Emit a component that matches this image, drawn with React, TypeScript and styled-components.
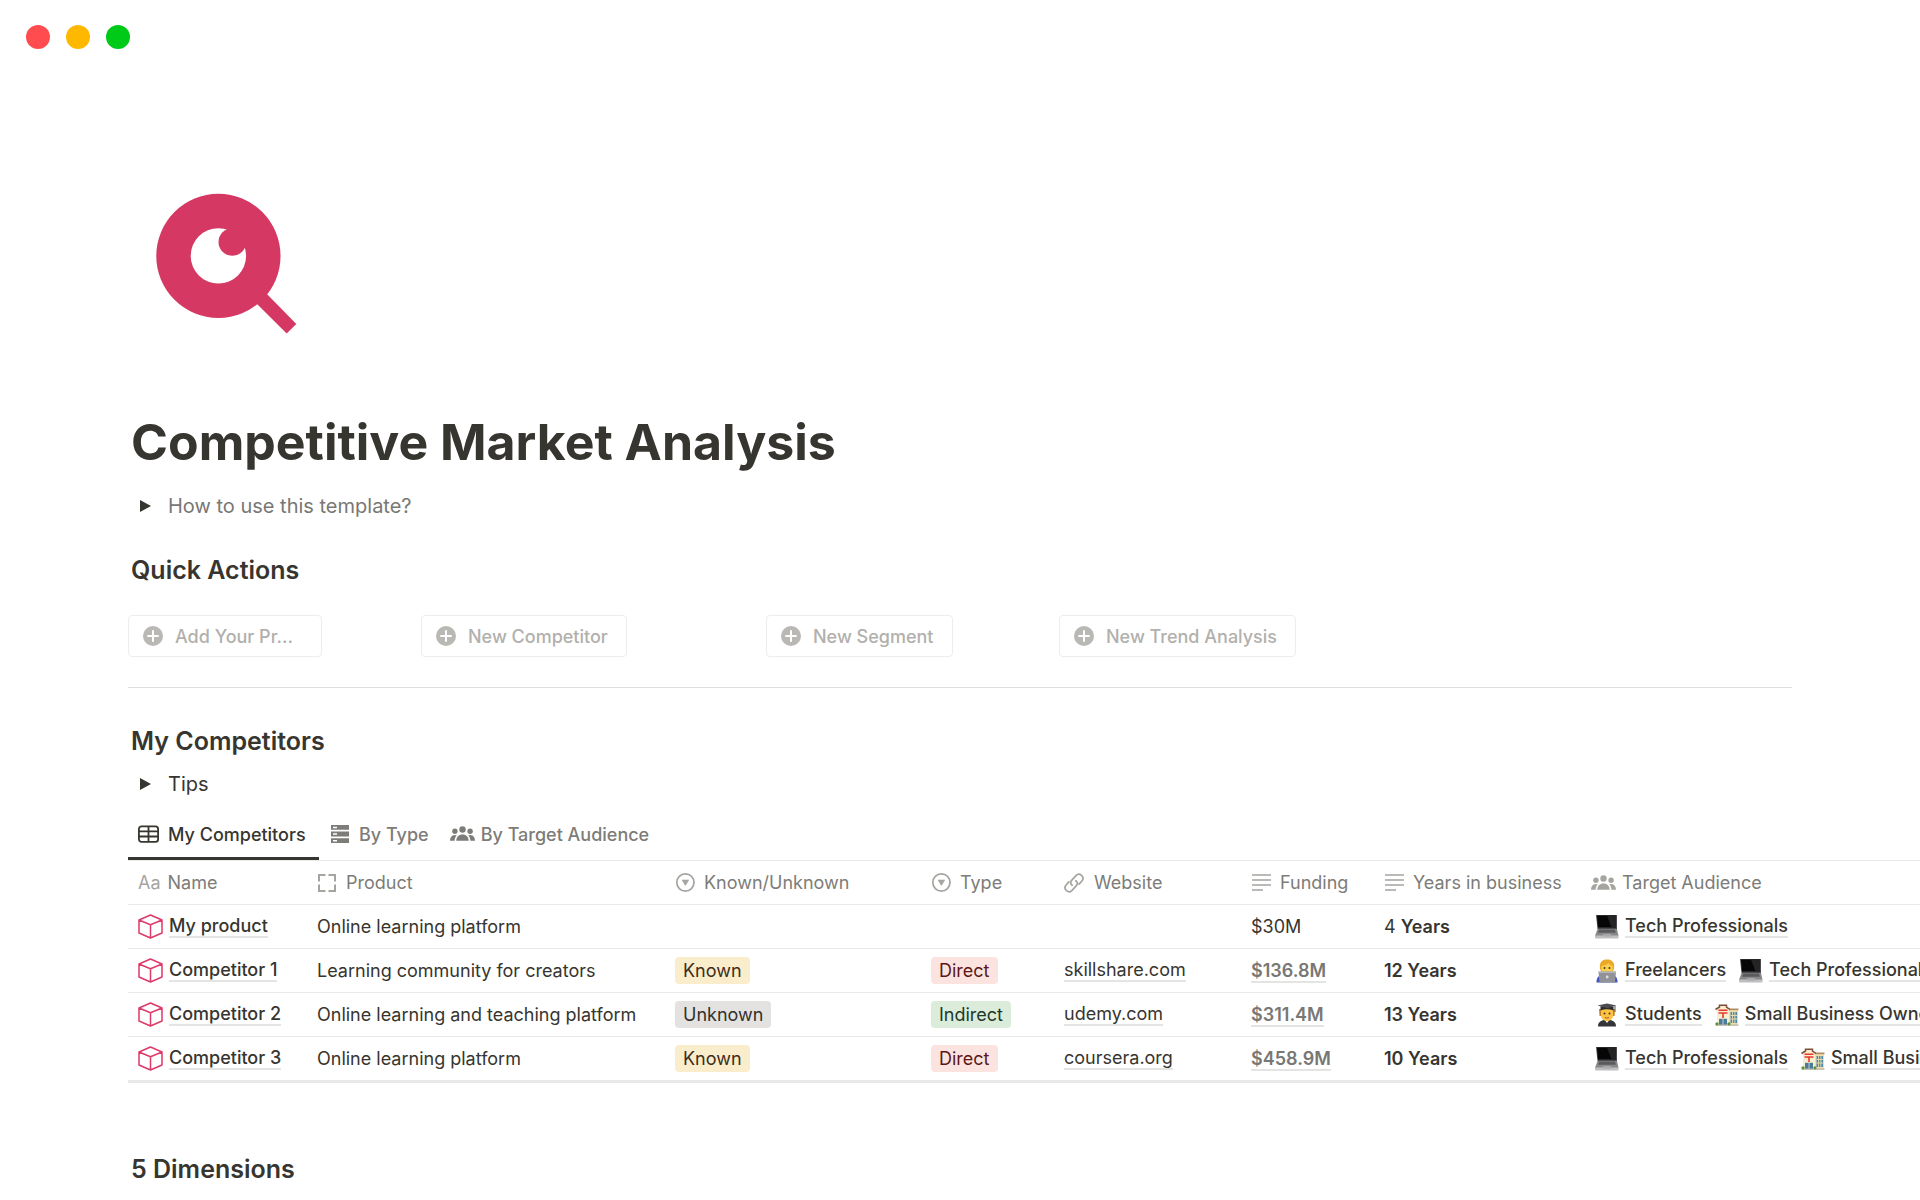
import React from 'react';
import styled, { createGlobalStyle } from 'styled-components';

const GlobalStyle = createGlobalStyle`
  * { box-sizing: border-box; }
  body {
    margin: 0;
    background: #fff;
    color: #37352f;
    font-family: Inter, 'Liberation Sans', sans-serif;
    -webkit-font-smoothing: antialiased;
  }
  h1, h2 { margin: 0; }
  button { font-family: inherit; cursor: pointer; }
  svg { display: block; flex: none; }
`;

/* ---------- layout ---------- */

const Window = styled.div`
  overflow: hidden;
`;

const TitleBar = styled.header`
  display: flex;
  gap: 16px;
  padding: 25px 26px;
`;

const Light = styled.span<{ $color: string }>`
  width: 24px;
  height: 24px;
  border-radius: 50%;
  background: ${(p) => p.$color};
`;

const Page = styled.main`
  padding: 106px 0 0 128px;
`;

const Section = styled.section`
  padding-right: 128px;
`;

const Title = styled.h1`
  margin-top: 58px;
  padding-left: 3px;
  font-size: 50px;
  line-height: 64px;
  font-weight: 700;
`;

const Heading = styled.h2<{ $space: number }>`
  margin-top: ${(p) => p.$space}px;
  padding-left: 3px;
  font-size: 25px;
  line-height: 34px;
  font-weight: 600;
`;

const Toggle = styled.button<{ $muted?: boolean; $space: number }>`
  display: flex;
  align-items: center;
  gap: 17px;
  margin-top: ${(p) => p.$space}px;
  padding: 0 0 0 12px;
  border: 0;
  background: none;
  font-size: 20px;
  line-height: 30px;
  color: ${(p) => (p.$muted ? '#787774' : '#37352f')};
`;

const Actions = styled.div`
  display: grid;
  grid-template-columns: 247fr 299fr 247fr 733fr;
  gap: 46px;
  margin-top: 28px;
`;

const ActionButton = styled.button`
  display: flex;
  align-items: center;
  justify-self: start;
  gap: 12px;
  min-width: 187px;
  height: 42px;
  padding: 0 18px 0 14px;
  border: 1px solid #ededec;
  border-radius: 4px;
  background: #fff;
  color: #b1b0ac;
  font-size: 18px;
  font-weight: 500;
  white-space: nowrap;

  &:first-child { min-width: 194px; }
`;

const Divider = styled.hr`
  height: 1px;
  margin: 30px 0 0;
  border: 0;
  background: #dfdfde;
`;

const Tabs = styled.div`
  display: flex;
  gap: 2px;
  margin-top: 9px;
`;

const Tab = styled.button<{ $active?: boolean; $gap: number }>`
  display: flex;
  align-items: center;
  gap: ${(p) => p.$gap}px;
  height: 52px;
  padding: 3px 9px 0 10px;
  border: 0;
  border-bottom: 3px solid ${(p) => (p.$active ? '#37352f' : 'transparent')};
  background: none;
  color: ${(p) => (p.$active ? '#37352f' : '#7d7c78')};
  font-size: 18px;
  font-weight: 500;
  white-space: nowrap;

  &:first-child { min-width: 191px; }
`;

const TableClip = styled.div`
  overflow: hidden;
  border-top: 1px solid #e9e9e7;
  border-bottom: 3px solid #e9e9e7;
`;

const Table = styled.table`
  table-layout: fixed;
  width: 2200px;
  border-spacing: 0;
  font-size: 18px;

  th, td {
    height: 44px;
    padding: 0 10px;
    border-bottom: 1px solid #e9e9e7;
    text-align: left;
    white-space: nowrap;
  }
  th {
    color: #7d7c78;
    font-weight: 400;
  }
  tbody tr:last-child td {
    height: 43px;
    border-bottom: 0;
  }
`;

const Inline = styled.div<{ $gap: number }>`
  display: flex;
  align-items: center;
  gap: ${(p) => p.$gap}px;
`;

const HeadIcon = styled.span`
  display: flex;
  color: #a5a49f;
`;

const Link = styled.a<{ $strong?: boolean; $muted?: boolean }>`
  padding-top: 1px;
  border-bottom: 2px solid #e4e4e2;
  line-height: 20px;
  color: ${(p) => (p.$muted ? '#787774' : '#37352f')};
  font-weight: ${(p) => (p.$muted ? 600 : p.$strong ? 500 : 400)};
  text-decoration: none;
`;

const tones = {
  yellow: ['#faedcc', '#402c1b'],
  gray: ['#e3e2e0', '#32302c'],
  red: ['#fbe4e0', '#5d1715'],
  green: ['#dcecda', '#1c3829'],
};
type Tone = keyof typeof tones;

const Tag = styled.span<{ $tone: Tone }>`
  display: inline-block;
  padding: 0 8px;
  border-radius: 4px;
  line-height: 27px;
  vertical-align: middle;
  background: ${(p) => tones[p.$tone][0]};
  color: ${(p) => tones[p.$tone][1]};
`;

const AudienceList = styled.div`
  display: flex;
  gap: 13px;
`;

/* ---------- icons ---------- */

const PageIcon = () => (
  <svg width="172" height="172" viewBox="0 0 172 172" role="img" aria-label="Magnifier">
    <path fill="#d63864" fillRule="evenodd" d="M90.400 13.800a62.100 62.100 0 1 0 0 124.200a62.100 62.100 0 1 0 0-124.200ZM90.400 48.200a27.700 27.700 0 1 0 0 55.400a27.700 27.700 0 1 0 0-55.400Z" />
    <circle cx="104.300" cy="62" r="13.800" fill="#d63864" />
    <path fill="#d63864" d="M133 108 168.300 144 158.700 153.500 123 118Z" />
  </svg>
);

const Triangle = () => (
  <svg width="11" height="12" viewBox="0 0 11 12" aria-hidden="true">
    <path d="M0 0 11 6 0 12Z" fill="#37352f" />
  </svg>
);

const PlusCircle = () => (
  <svg width="20" height="20" viewBox="0 0 20 20" aria-hidden="true">
    <circle cx="10" cy="10" r="10" fill="#b9b8b5" />
    <path d="M10 5v10M5 10h10" stroke="#fff" strokeWidth="2" strokeLinecap="round" />
  </svg>
);

const TableIcon = () => (
  <svg width="21" height="18" viewBox="0 0 21 18" fill="none" stroke="currentColor" strokeWidth="1.800" aria-hidden="true">
    <rect x="0.900" y="1.400" width="19.200" height="15.400" rx="2.600" />
    <path d="M1 6.400h19M1 11.500h19M10.500 1.500v15.200" />
  </svg>
);

const ServerIcon = () => (
  <svg width="18" height="18" viewBox="0 0 18 18" aria-hidden="true">
    <path fill="currentColor" fillRule="evenodd" d="M0 0h18v4.800H0ZM2 1.700v1.500h4V1.700ZM0 6.600h18v4.800H0ZM2 8.200v1.500h4V8.200ZM0 13.200h18V18H0ZM2 14.900v1.500h4v-1.500Z" />
  </svg>
);

const GroupIcon = () => (
  <svg width="25" height="16" viewBox="0 0 25 16" fill="currentColor" aria-hidden="true">
    <circle cx="12.500" cy="3.500" r="3.200" />
    <circle cx="4.900" cy="5.300" r="2.700" />
    <circle cx="20.100" cy="5.300" r="2.700" />
    <path d="M6.300 14.800c0-3.700 2.400-6.400 6.200-6.400s6.200 2.700 6.200 6.400ZM0 14.800C0 11.500 1.700 9.300 4.600 9.100c1 0 1.600.2 2.200.5-1.400 1.300-2.200 3.100-2.200 5.200ZM25 14.800c0-3.300-1.700-5.500-4.600-5.700-1 0-1.600.2-2.200.5 1.400 1.300 2.200 3.100 2.200 5.200Z" />
  </svg>
);

const FrameIcon = () => (
  <svg width="19" height="18" viewBox="0 0 19 18" fill="none" stroke="currentColor" strokeWidth="2" aria-hidden="true">
    <path d="M2 7.500V1h6.500M11.500 1H18v6.500M18 10.500V17h-6.500M8.500 17H2v-6.500" />
  </svg>
);

const SelectIcon = () => (
  <svg width="20" height="19" viewBox="0 0 20 19" aria-hidden="true">
    <circle cx="10.400" cy="9.500" r="8.600" fill="none" stroke="currentColor" strokeWidth="1.700" />
    <path d="M7.100 7h6.600L10.400 12.500Z" fill="currentColor" stroke="currentColor" strokeLinejoin="round" strokeWidth=".6" />
  </svg>
);

const LinkIcon = () => (
  <svg width="20" height="20" viewBox="0 0 20 20" fill="none" stroke="currentColor" strokeWidth="1.700" strokeLinecap="round" aria-hidden="true">
    <path d="M8.200 12.300c-1.800-1.200-2-3.500-.6-5l4.600-5c3.200-3.200 8.900 1.400 5.900 5.500l-3 3.300" />
    <path d="M11.800 7.700c1.800 1.200 2 3.500.6 5l-4.600 5c-3.200 3.200-8.900-1.400-5.900-5.500l3-3.300" />
  </svg>
);

const LinesIcon = () => (
  <svg width="20" height="17" viewBox="0 0 20 17" stroke="currentColor" strokeWidth="1.700" aria-hidden="true">
    <path d="M1 1h19M1 6h19M1 11h19M1 16h11" />
  </svg>
);

const CubeIcon = () => (
  <svg width="25" height="25" viewBox="0 0 25 25" fill="none" stroke="#dd3a6a" strokeWidth="1.500" strokeLinejoin="round" aria-hidden="true">
    <path d="M12.500 1 24 6v13l-11.500 5L1 19V6ZM1 6l11.500 4.700L24 6M12.500 10.700V24" />
  </svg>
);

const LaptopEmoji = () => (
  <svg width="24" height="24" viewBox="0 0 24 24" aria-hidden="true">
    <path d="M1 0h21v14H2.500Z" fill="#4a4a4c" />
    <path d="M2 .600h19v12H3Z" fill="#060606" />
    <path d="M12 .600h9v12h-4.500Z" fill="#242426" />
    <path d="M2.500 14H22l1.500 7H0Z" fill="#88888a" />
    <path d="M4 14.600h16l.8 3.200H3.200Z" fill="#5b5b5e" />
    <path d="M0 20.500h23.500v2.200q0 .8-.8.800H.8q-.8 0-.8-.8Z" fill="#bfbfc1" />
    <path d="M8 19h8v2.500H8Z" fill="#a9a9ab" />
  </svg>
);

const CoderEmoji = () => (
  <svg width="24" height="24" viewBox="0 0 24 24" aria-hidden="true">
    <path d="M1.500 23.500c0-5 2-7 6-7.500h9c4 .5 6 2.500 6 7.500Z" fill="#3f51c4" />
    <path d="M5 10C4 3 7 .500 12 .500S20 3 19 10l-1.500 3h-11Z" fill="#eba92a" />
    <path d="M6.500 7c3-.5 6-1.500 7-3 .8 1.500 2.500 2.500 4 3v4c0 4-2.500 5.500-5.500 5.500S6.500 15 6.500 11Z" fill="#fdd04b" />
    <circle cx="9.500" cy="9" r="1" fill="#4b3420" />
    <circle cx="14.500" cy="9" r="1" fill="#4b3420" />
    <path d="M3.500 12.500h17.500l-1 11H4.500Z" fill="#929398" />
    <path d="M3.500 12.500h17.500l-.2 1.500H3.700Z" fill="#b4b5b9" />
    <circle cx="12.200" cy="18" r="1.400" fill="#dcdde0" />
  </svg>
);

const StudentEmoji = () => (
  <svg width="24" height="24" viewBox="0 0 24 24" aria-hidden="true">
    <path d="M3 23.500c0-4 2.500-6 6-6.500h6c3.500.5 6 2.500 6 6.500Z" fill="#343538" />
    <path d="m9 16 3 4 3-4Z" fill="#f3f3f3" />
    <path d="M4 6h16l-.5 7H4.500Z" fill="#c98320" />
    <path d="M6 6h12v6c0 4-3 6-6 6s-6-2-6-6Z" fill="#fdc343" />
    <circle cx="9.500" cy="10.500" r="1" fill="#4b3420" />
    <circle cx="14.500" cy="10.500" r="1" fill="#4b3420" />
    <path d="M10 14.500q2 1.200 4 0" fill="none" stroke="#a8572b" />
    <path d="M5.500 3.500h13v4q-6.500-2.500-13 0Z" fill="#2c2d30" />
    <path d="m2.500 2.500 9.500-2 9.500 2-9.500 2.800Z" fill="#4b4c50" />
    <path d="M20 3v6" stroke="#56575a" />
  </svg>
);

const OfficeEmoji = () => (
  <svg width="24" height="24" viewBox="0 0 24 24" aria-hidden="true">
    <path d="M14 6.500h9V22h-9Z" fill="#f0dfae" />
    <path d="M13.500 5.500h10v1.700h-10Z" fill="#b38b62" />
    <path d="M15.500 9h6.500v11h-6.500Z" fill="#4b89ad" />
    <path d="M17.600 9v11M19.900 9v11M15.500 12.500H22M15.500 16H22" stroke="#f0dfae" strokeWidth=".9" />
    <path d="M2 5.500 8 1l6 4.500V22H2Z" fill="#f7edcf" />
    <path d="M.5 6.500 4.500 4V2.200h7V4l3.500 2.500" fill="none" stroke="#7d4f3b" strokeWidth="1.500" />
    <path d="M3.500 7.200h9M3.500 10h9M8 10v5" fill="none" stroke="#e9392f" strokeWidth="1.600" />
    <path d="M4 15.800h8V22H4Z" fill="#4b7d9b" />
    <path d="M8 15.800V22" stroke="#d6e3e8" strokeWidth=".8" />
    <path d="M.5 21.500h23v1.300H.5Z" fill="#b9b3a4" />
    <circle cx="2" cy="20.800" r="1.600" fill="#5d8f3d" />
    <circle cx="14" cy="20.800" r="1.600" fill="#5d8f3d" />
  </svg>
);

/* ---------- data ---------- */

const audiences = {
  tech: { label: 'Tech Professionals', Icon: LaptopEmoji },
  freelance: { label: 'Freelancers', Icon: CoderEmoji },
  students: { label: 'Students', Icon: StudentEmoji },
  owners: { label: 'Small Business Owners', Icon: OfficeEmoji },
};
type Audience = keyof typeof audiences;

const columns: { label: string; width: number; gap: number; icon: React.ReactNode }[] = [
  { label: 'Name', width: 179, gap: 7, icon: 'Aa' },
  { label: 'Product', width: 358, gap: 10, icon: <FrameIcon /> },
  { label: 'Known/Unknown', width: 256, gap: 9, icon: <SelectIcon /> },
  { label: 'Type', width: 133, gap: 9, icon: <SelectIcon /> },
  { label: 'Website', width: 187, gap: 10, icon: <LinkIcon /> },
  { label: 'Funding', width: 133, gap: 9, icon: <LinesIcon /> },
  { label: 'Years in business', width: 207, gap: 9, icon: <LinesIcon /> },
  { label: 'Target Audience', width: 747, gap: 6, icon: <GroupIcon /> },
];

interface Row {
  name: string;
  product: string;
  known?: [string, Tone];
  type?: [string, Tone];
  website?: string;
  funding: React.ReactNode;
  years: React.ReactNode;
  audience: Audience[];
}

const Strong = styled.strong`
  font-weight: 600;
`;

const rows: Row[] = [
  {
    name: 'My product', product: 'Online learning platform',
    funding: '$30M', years: <>4 <Strong>Years</Strong></>, audience: ['tech'],
  },
  {
    name: 'Competitor 1', product: 'Learning community for creators',
    known: ['Known', 'yellow'], type: ['Direct', 'red'], website: 'skillshare.com',
    funding: <Link href="#funding-1" $muted>$136.8M</Link>, years: <Strong>12 Years</Strong>,
    audience: ['freelance', 'tech'],
  },
  {
    name: 'Competitor 2', product: 'Online learning and teaching platform',
    known: ['Unknown', 'gray'], type: ['Indirect', 'green'], website: 'udemy.com',
    funding: <Link href="#funding-2" $muted>$311.4M</Link>, years: <Strong>13 Years</Strong>,
    audience: ['students', 'owners'],
  },
  {
    name: 'Competitor 3', product: 'Online learning platform',
    known: ['Known', 'yellow'], type: ['Direct', 'red'], website: 'coursera.org',
    funding: <Link href="#funding-3" $muted>$458.9M</Link>, years: <Strong>10 Years</Strong>,
    audience: ['tech', 'owners'],
  },
];

const actions = ['Add Your Pr...', 'New Competitor', 'New Segment', 'New Trend Analysis'];

const AudienceCell = styled.td`
  && { padding-left: 14px; }
`;

/* ---------- page ---------- */

export default function App() {
  return (
    <Window>
      <GlobalStyle />
      <TitleBar>
        <Light $color="#ff4d4f" />
        <Light $color="#ffb800" />
        <Light $color="#00ca18" />
      </TitleBar>
      <Page>
        <Section>
          <PageIcon />
          <Title>Competitive Market Analysis</Title>
          <Toggle $muted $space={17} aria-expanded={false}><Triangle />How to use this template?</Toggle>
          <Heading $space={32}>Quick Actions</Heading>
          <Actions>
            {actions.map((label) => (
              <ActionButton key={label}><PlusCircle />{label}</ActionButton>
            ))}
          </Actions>
          <Divider />
          <Heading $space={36}>My Competitors</Heading>
          <Toggle $space={11} aria-expanded={false}><Triangle />Tips</Toggle>
          <Tabs>
            <Tab $active $gap={9}><TableIcon />My Competitors</Tab>
            <Tab $gap={10}><ServerIcon />By Type</Tab>
            <Tab $gap={6}><GroupIcon />By Target Audience</Tab>
          </Tabs>
        </Section>
        <TableClip>
          <Table>
            <colgroup>
              {columns.map((c) => <col key={c.label} width={c.width} />)}
            </colgroup>
            <thead>
              <tr>
                {columns.map((c) => (
                  <th key={c.label} scope="col">
                    <Inline $gap={c.gap}><HeadIcon>{c.icon}</HeadIcon>{c.label}</Inline>
                  </th>
                ))}
              </tr>
            </thead>
            <tbody>
              {rows.map((r) => (
                <tr key={r.name}>
                  <td><Inline $gap={6}><CubeIcon /><Link href="#product" $strong>{r.name}</Link></Inline></td>
                  <td>{r.product}</td>
                  <td>{r.known && <Tag $tone={r.known[1]}>{r.known[0]}</Tag>}</td>
                  <td>{r.type && <Tag $tone={r.type[1]}>{r.type[0]}</Tag>}</td>
                  <td><Inline $gap={0}>{r.website && <Link href="#website">{r.website}</Link>}</Inline></td>
                  <td>{r.funding}</td>
                  <td>{r.years}</td>
                  <AudienceCell>
                    <AudienceList>
                      {r.audience.map((key) => {
                        const { label, Icon } = audiences[key];
                        return <Inline key={key} $gap={6}><Icon /><Link href="#audience" $strong>{label}</Link></Inline>;
                      })}
                    </AudienceList>
                  </AudienceCell>
                </tr>
              ))}
            </tbody>
          </Table>
        </TableClip>
        <Section>
          <Heading $space={69}>5 Dimensions</Heading>
        </Section>
      </Page>
    </Window>
  );
}
